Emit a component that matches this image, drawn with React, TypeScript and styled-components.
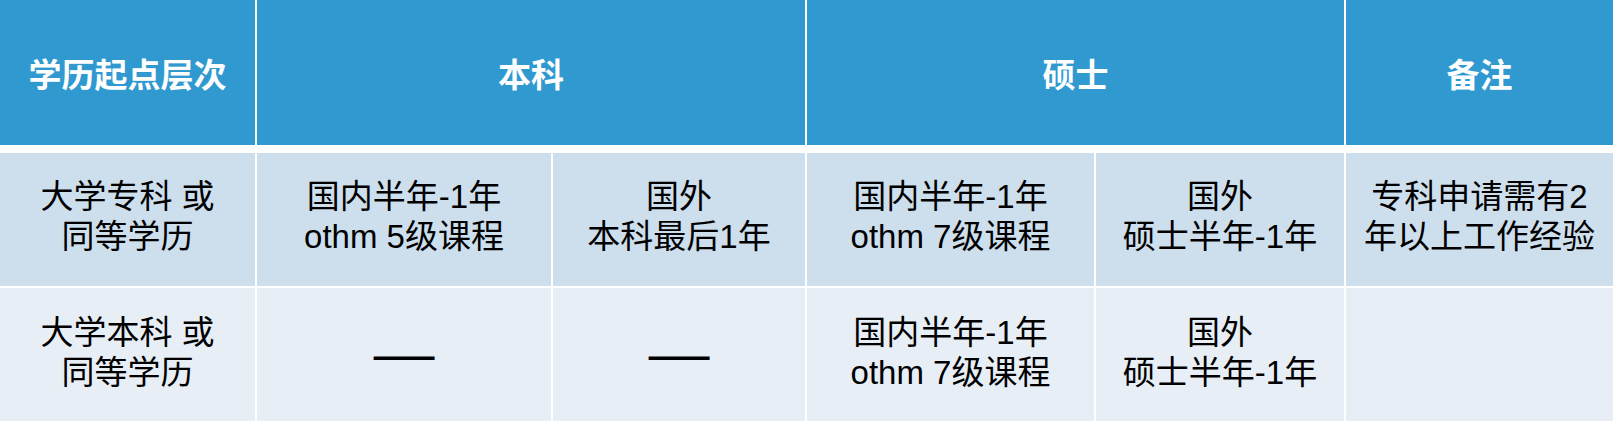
import React from 'react'
import styled, { createGlobalStyle } from 'styled-components'

const GlobalStyle = createGlobalStyle`
  html, body {
    margin: 0;
    padding: 0;
    background: #ffffff;
  }
  body {
    font-family: 'Liberation Sans', 'Noto Sans CJK SC', sans-serif;
  }
`

type Tone = 'dark' | 'light'

interface BodyRow {
  tone: Tone
  cells: string[][]
}

const rows: BodyRow[] = [
  {
    tone: 'dark',
    cells: [
      ['大学专科 或', '同等学历'],
      ['国内半年-1年', 'othm 5级课程'],
      ['国外', '本科最后1年'],
      ['国内半年-1年', 'othm 7级课程'],
      ['国外', '硕士半年-1年'],
      ['专科申请需有2', '年以上工作经验']
    ]
  },
  {
    tone: 'light',
    cells: [
      ['大学本科 或', '同等学历'],
      ['——'],
      ['——'],
      ['国内半年-1年', 'othm 7级课程'],
      ['国外', '硕士半年-1年'],
      []
    ]
  }
]

const App = () => {
  return (
    <>
      <GlobalStyle />
      <Table>
        <HeadCell>学历起点层次</HeadCell>
        <HeadCell $span={2}>本科</HeadCell>
        <HeadCell $span={2}>硕士</HeadCell>
        <HeadCell>备注</HeadCell>
        {rows.map((row, r) =>
          row.cells.map((lines, c) => (
            <Cell key={`${r}-${c}`} $tone={row.tone}>
              {lines.map((line, i) =>
                line === '——' ? (
                  <Dash key={i}>{line}</Dash>
                ) : (
                  <Line key={i}>{line}</Line>
                )
              )}
            </Cell>
          ))
        )}
      </Table>
    </>
  )
}

const Table = styled.div`
  display: grid;
  grid-template-columns: 255px 294px 252px 287px 248px 1fr;
  grid-template-rows: 151px 133px 135px;
  column-gap: 2px;
  row-gap: 2px;
  width: 1613px;
  background: #ffffff;
`

const HeadCell = styled.div<{ $span?: number }>`
  grid-column: span ${(props) => props.$span || 1};
  display: flex;
  align-items: center;
  justify-content: center;
  box-sizing: border-box;
  border-bottom: 6px solid #ffffff;
  background: #3099d0;
  background-clip: padding-box;
  color: #ffffff;
  font-family: 'Noto Sans CJK SC', 'Liberation Sans', sans-serif;
  font-weight: 700;
  font-size: 33px;
`

const Cell = styled.div<{ $tone: Tone }>`
  display: flex;
  flex-direction: column;
  align-items: center;
  justify-content: center;
  box-sizing: border-box;
  padding-bottom: 6px;
  background: ${(props) => (props.$tone === 'dark' ? '#cddeec' : '#e8eef6')};
  color: #000000;
  font-size: 33px;
  line-height: 40px;
  text-align: center;
`

const Line = styled.span`
  display: block;
  white-space: nowrap;
`

const Dash = styled.span`
  display: block;
  font-family: 'Noto Sans CJK SC', sans-serif;
  font-size: 38px;
  font-weight: 700;
  line-height: 40px;
`

export default App
